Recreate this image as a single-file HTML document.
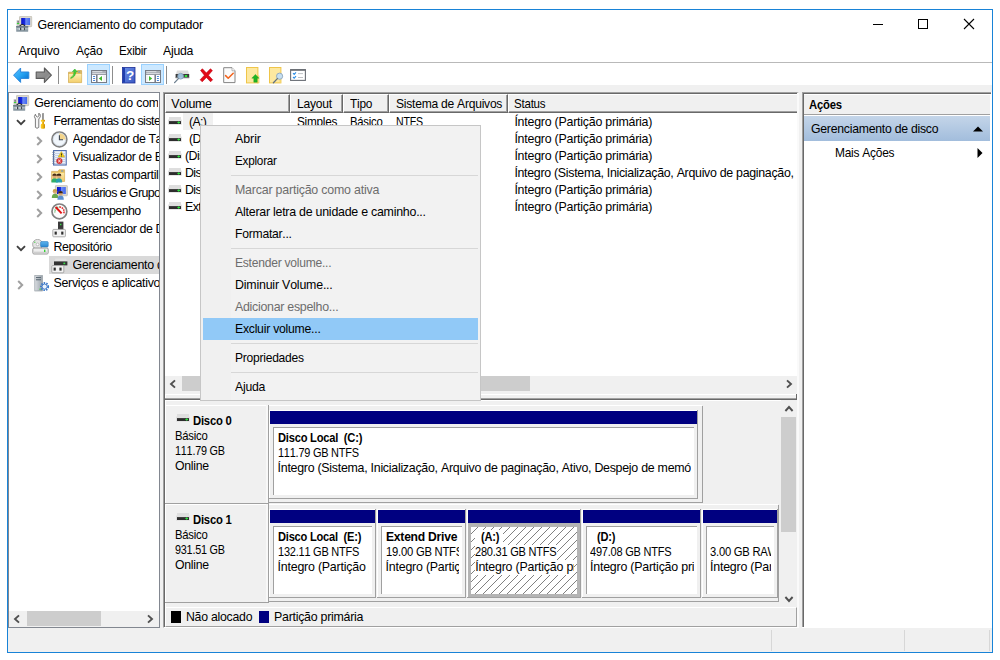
<!DOCTYPE html>
<html lang="pt-BR"><head><meta charset="utf-8"><title>Gerenciamento do computador</title>
<style>
html,body{margin:0;padding:0;}
body{width:1000px;height:660px;overflow:hidden;background:#fff;position:relative;font-family:'Liberation Sans', sans-serif;font-size:12px;color:#000;font-kerning:none;}
div,span,svg{box-sizing:border-box;}
</style></head><body>
<div style="position:absolute;left:7px;top:9px;width:986px;height:644px;border:1px solid #1883d7;background:#fff;"></div>
<svg style="position:absolute;left:16px;top:16px;" width="17" height="17" viewBox="0 0 17 17"><defs><linearGradient id="g1" x1="0" x2="1" y1="0" y2="0"><stop offset="0" stop-color="#0a12c8"/><stop offset=".45" stop-color="#1a2fe0"/><stop offset=".5" stop-color="#6f8cf5"/><stop offset="1" stop-color="#3f66ee"/></linearGradient></defs>
<rect x="3.5" y="0.3" width="12.2" height="10.4" rx="0.8" fill="#dcd9cf" stroke="#b5b2a6" stroke-width=".6"/>
<rect x="5.2" y="2" width="8.9" height="7" fill="url(#g1)"/>
<rect x="0.6" y="4.2" width="2.6" height="6.2" fill="#c9c9c9"/><rect x="1.6" y="4.8" width="1" height="2" fill="#555"/><rect x="0.9" y="7" width="2.2" height="1.1" fill="#35d335"/>
<path d="M3.7 10 Q6.5 7 9 10" fill="none" stroke="#2a2a2a" stroke-width="1.2"/>
<rect x="0.2" y="10" width="12" height="5.8" rx="0.6" fill="#8a99a3"/>
<rect x="0.2" y="10" width="12" height="1.3" fill="#6e7d87"/>
<rect x="0.6" y="12.2" width="11.2" height="1.2" fill="#b8c3ca"/>
<rect x="3.8" y="11.6" width="1.3" height="2.6" fill="#3c4348"/><rect x="7.6" y="11.6" width="1.3" height="2.6" fill="#3c4348"/>
<rect x="2.8" y="11.8" width="1" height="2.2" fill="#dfe5e8"/><rect x="6.6" y="11.8" width="1" height="2.2" fill="#dfe5e8"/></svg>
<span style="position:absolute;left:37.5px;top:18px;height:14px;line-height:14px;white-space:pre;font-size:12.4px;color:#000;letter-spacing:-0.201px;">Gerenciamento do computador</span>
<svg style="position:absolute;left:868px;top:14px;" width="120" height="20" viewBox="0 0 120 20"><path d="M5 10.5H15" stroke="#000" stroke-width="1"/>
<rect x="50.5" y="5.5" width="9" height="9" fill="none" stroke="#000" stroke-width="1"/>
<path d="M96 5L106 15M106 5L96 15" stroke="#000" stroke-width="1.1"/></svg>
<span style="position:absolute;left:18.4px;top:44px;height:14px;line-height:14px;white-space:pre;font-size:12.4px;color:#000;letter-spacing:-0.136px;">Arquivo</span>
<span style="position:absolute;left:76.4px;top:44px;height:14px;line-height:14px;white-space:pre;font-size:12.4px;color:#000;letter-spacing:-0.250px;"><span style="display:inline-block;transform:scaleX(0.9673);transform-origin:0 0;">Ação</span></span>
<span style="position:absolute;left:119px;top:44px;height:14px;line-height:14px;white-space:pre;font-size:12.4px;color:#000;letter-spacing:-0.250px;"><span style="display:inline-block;transform:scaleX(0.9417);transform-origin:0 0;">Exibir</span></span>
<span style="position:absolute;left:163.4px;top:44px;height:14px;line-height:14px;white-space:pre;font-size:12.4px;color:#000;letter-spacing:-0.250px;"><span style="display:inline-block;transform:scaleX(0.9901);transform-origin:0 0;">Ajuda</span></span>
<div style="position:absolute;left:8px;top:62px;width:984px;height:1px;background:#b9b9b9;"></div>
<svg style="position:absolute;left:12.6px;top:67px;" width="18" height="16" viewBox="0 0 18 16"><defs><linearGradient id="g2" x1="0" x2="1" y1="0" y2="1"><stop offset="0" stop-color="#58c2ff"/><stop offset=".5" stop-color="#27a3f2"/><stop offset="1" stop-color="#0467c8"/></linearGradient></defs>
<path d="M0.6 8.2 L7.6 1 L7.6 5 L15.8 5 L15.8 11.4 L7.6 11.4 L7.6 15.4 Z" fill="url(#g2)" stroke="#2a86dc" stroke-width="1" stroke-linejoin="round"/></svg>
<svg style="position:absolute;left:35px;top:67px;" width="18" height="16" viewBox="0 0 18 16"><defs><linearGradient id="g3" x1="0" x2="1" y1="0" y2="1"><stop offset="0" stop-color="#9a9a9a"/><stop offset=".6" stop-color="#8a8a8a"/><stop offset="1" stop-color="#b5b5b5"/></linearGradient></defs>
<path d="M16.4 8.2 L9.4 1 L9.4 5 L1.2 5 L1.2 11.4 L9.4 11.4 L9.4 15.4 Z" fill="url(#g3)" stroke="#5a5a5a" stroke-width="1.1" stroke-linejoin="round"/></svg>
<div style="position:absolute;left:58px;top:66px;width:1px;height:18px;background:#8d8d8d;"></div>
<svg style="position:absolute;left:68px;top:69px;" width="16" height="16" viewBox="0 0 16 16"><defs><linearGradient id="g4" x1="0" x2="0" y1="0" y2="1"><stop offset="0" stop-color="#fdeeb5"/><stop offset="1" stop-color="#f3cf6c"/></linearGradient></defs>
<path d="M0.5 3.2 L8.5 3.2 L9.5 1.6 L13.6 1.6 L13.6 13.6 L0.5 13.6 Z" fill="#e9c15b" stroke="#c9a04a" stroke-width=".7"/>
<rect x="0.8" y="5" width="12.6" height="8.4" fill="url(#g4)"/>
<rect x="10" y="2.4" width="2.4" height="1.2" rx=".6" fill="#4e8fe0"/>
<path d="M2.6 8.8 Q6 7 6.2 2.4 L4.4 2.6 L6.8 0 L9.4 2.8 L7.8 2.6 Q7.6 8 2.8 9.4 Z" fill="#3fcf35" stroke="#2aa822" stroke-width=".5"/></svg>
<div style="position:absolute;left:87px;top:64px;width:23px;height:21px;background:#cce8ff;border:1px solid #99d1ff;"></div>
<svg style="position:absolute;left:91px;top:70px;" width="16" height="13" viewBox="0 0 16 13"><rect x=".5" y=".5" width="15" height="12" fill="#8a8f99" stroke="#777c86" stroke-width="1"/>
<rect x="1.2" y="1.2" width="13.6" height="1.2" fill="#e9ebee"/><rect x="1.2" y="3.1" width="13.6" height="1.1" fill="#dfe2e6"/>
<rect x="11.6" y="1.1" width="1" height="1.2" fill="#8a8f99"/><rect x="13.4" y="1.1" width="1" height="1.2" fill="#8a8f99"/><rect x="1" y="5" width="4.2" height="7" fill="#fff"/><rect x="6.4" y="5" width="8.6" height="7" fill="#fff"/>
<rect x="2" y="6.1" width="2.2" height="1" rx=".5" fill="#3f7fd6"/><rect x="2" y="8" width="2.2" height="1" rx=".5" fill="#3f7fd6"/><rect x="2" y="9.9" width="2.2" height="1" rx=".5" fill="#3f7fd6"/>
<rect x="5.2" y="4.6" width="1.1" height="7.8" fill="#717784"/>
<path d="M11 6 L11 11 L7.8 8.5 Z" fill="#41b82c"/><rect x="12.4" y="5.4" width="2.2" height="6.4" fill="#f1f1f1"/></svg>
<div style="position:absolute;left:112px;top:66px;width:1px;height:18px;background:#8d8d8d;"></div>
<svg style="position:absolute;left:122px;top:67px;" width="14" height="17" viewBox="0 0 14 17"><defs><linearGradient id="g5" x1="0" x2="1" y1="0" y2="1"><stop offset="0" stop-color="#6d92ea"/><stop offset="1" stop-color="#3a58c2"/></linearGradient></defs>
<rect x=".4" y=".4" width="12.6" height="15.6" fill="url(#g5)" stroke="#1d2f96" stroke-width=".8"/>
<rect x=".8" y=".8" width="2.2" height="14.8" fill="#1f3fae"/>
<text x="8" y="13" font-family="Liberation Sans, sans-serif" font-weight="bold" font-size="13.5" text-anchor="middle" fill="#fff">?</text></svg>
<div style="position:absolute;left:141px;top:64px;width:23px;height:21px;background:#cce8ff;border:1px solid #99d1ff;"></div>
<svg style="position:absolute;left:145px;top:70px;" width="16" height="13" viewBox="0 0 16 13"><rect x=".5" y=".5" width="15" height="12" fill="#8a8f99" stroke="#777c86" stroke-width="1"/>
<rect x="1.2" y="1.2" width="13.6" height="1.2" fill="#e9ebee"/><rect x="1.2" y="3.1" width="13.6" height="1.1" fill="#dfe2e6"/>
<rect x="11.6" y="1.1" width="1" height="1.2" fill="#8a8f99"/><rect x="13.4" y="1.1" width="1" height="1.2" fill="#8a8f99"/><rect x="1" y="5" width="8.6" height="7" fill="#fff"/><rect x="10.8" y="5" width="4.2" height="7" fill="#fff"/>
<rect x="11.8" y="6.1" width="2.2" height="1" rx=".5" fill="#3f7fd6"/><rect x="11.8" y="8" width="2.2" height="1" rx=".5" fill="#3f7fd6"/><rect x="11.8" y="9.9" width="2.2" height="1" rx=".5" fill="#3f7fd6"/>
<rect x="9.7" y="4.6" width="1.1" height="7.8" fill="#717784"/>
<path d="M4 6 L4 11 L7.2 8.5 Z" fill="#41b82c"/><rect x="1.2" y="5.4" width="1.6" height="6.4" fill="#f1f1f1"/></svg>
<div style="position:absolute;left:166px;top:66px;width:1px;height:18px;background:#8d8d8d;"></div>
<svg style="position:absolute;left:174px;top:70px;" width="17" height="14" viewBox="0 0 17 14"><path d="M3 0.6 L14 0.6 L15 4 L2 4 Z" fill="#dcdcdc"/>
<rect x="1.6" y="4" width="13.6" height="4" fill="#3a3a3a"/><rect x="1.6" y="7.4" width="13.6" height=".9" fill="#9a9a9a"/>
<rect x="10.8" y="5" width="2.4" height="2" fill="#2fe53a"/>
<circle cx="6.6" cy="6.2" r="2.9" fill="#a9cdea" fill-opacity=".9" stroke="#7d99b2" stroke-width=".8"/>
<path d="M4.4 8.6 L0.6 12.6" stroke="#6d7f8f" stroke-width="1.3" stroke-linecap="round"/></svg>
<svg style="position:absolute;left:198.6px;top:68px;" width="15" height="15" viewBox="0 0 15 15"><path d="M1.6 2.4 L3.4 0.8 L7.4 5 L11.4 0.8 L13.4 2.6 L9.4 7.2 L13.6 11.8 L11.6 13.8 L7.4 9.4 L3.2 13.8 L1.2 11.8 L5.4 7.2 Z" fill="#e20a17" stroke="#c00010" stroke-width=".6" stroke-linejoin="round"/></svg>
<svg style="position:absolute;left:223px;top:67px;" width="13" height="17" viewBox="0 0 13 17"><path d="M0.7 0.7 L9 0.7 L12 3.8 L12 15.6 L0.7 15.6 Z" fill="#fbfbfb" stroke="#858585" stroke-width="1"/>
<path d="M9 0.7 L9 3.8 L12 3.8" fill="#fff" stroke="#9a9a9a" stroke-width=".7"/>
<path d="M2.6 8.6 L5.2 11.2 L10.2 6.2" fill="none" stroke="#f2631c" stroke-width="1.5" stroke-linecap="round" stroke-linejoin="round"/></svg>
<svg style="position:absolute;left:246px;top:67px;" width="14" height="17" viewBox="0 0 14 17"><rect x=".5" y=".5" width="11.4" height="15.4" fill="#fde8a0" stroke="#efc549" stroke-width="1"/>
<rect x="11.4" y="9" width="1.6" height="6.9" fill="#fde8a0" stroke="#efc549" stroke-width=".6"/>
<path d="M9.4 7.4 L13 11.2 L11.2 11.2 L11.2 15.2 L7.8 15.2 L7.8 11.2 L5.8 11.2 Z" fill="#1fb424" stroke="#17a01c" stroke-width=".4"/></svg>
<svg style="position:absolute;left:269px;top:67px;" width="15" height="17" viewBox="0 0 15 17"><rect x=".5" y=".5" width="11.4" height="15.4" fill="#fde8a0" stroke="#efc549" stroke-width="1"/>
<rect x="10.6" y="10" width="1.3" height="5.9" fill="#f5d670"/>
<circle cx="10.6" cy="9.2" r="3.1" fill="#c5def0" stroke="#8fa6bb" stroke-width=".9"/>
<path d="M8.4 11.6 L4.4 15.8" stroke="#5f7080" stroke-width="1.3" stroke-linecap="round"/></svg>
<svg style="position:absolute;left:290px;top:69px;" width="16" height="12" viewBox="0 0 16 12"><rect x=".6" y=".6" width="14.8" height="10.8" fill="#fff" stroke="#6b6f76" stroke-width="1.1"/>
<rect x=".6" y=".2" width="14.8" height="1.6" fill="#6b6f76"/>
<path d="M3 4.2 L4.2 5.4 L6 3.4" fill="none" stroke="#2f8fe6" stroke-width="1.1"/><path d="M3 8 L4.2 9.2 L6 7.2" fill="none" stroke="#2f8fe6" stroke-width="1.1"/>
<rect x="8" y="4.2" width="5" height=".9" fill="#b9bcc0"/><rect x="8" y="8" width="5" height=".9" fill="#b9bcc0"/></svg>
<div style="position:absolute;left:8px;top:85px;width:984px;height:567px;background:#f0f0f0;"></div>
<div style="position:absolute;left:8px;top:92px;width:152px;height:536px;background:#fff;border:1px solid #828790;"></div>
<svg style="position:absolute;left:13px;top:95px;" width="17" height="17" viewBox="0 0 17 17"><defs><linearGradient id="g6" x1="0" x2="1" y1="0" y2="0"><stop offset="0" stop-color="#0a12c8"/><stop offset=".45" stop-color="#1a2fe0"/><stop offset=".5" stop-color="#6f8cf5"/><stop offset="1" stop-color="#3f66ee"/></linearGradient></defs>
<rect x="3.5" y="0.3" width="12.2" height="10.4" rx="0.8" fill="#dcd9cf" stroke="#b5b2a6" stroke-width=".6"/>
<rect x="5.2" y="2" width="8.9" height="7" fill="url(#g6)"/>
<rect x="0.6" y="4.2" width="2.6" height="6.2" fill="#c9c9c9"/><rect x="1.6" y="4.8" width="1" height="2" fill="#555"/><rect x="0.9" y="7" width="2.2" height="1.1" fill="#35d335"/>
<path d="M3.7 10 Q6.5 7 9 10" fill="none" stroke="#2a2a2a" stroke-width="1.2"/>
<rect x="0.2" y="10" width="12" height="5.8" rx="0.6" fill="#8a99a3"/>
<rect x="0.2" y="10" width="12" height="1.3" fill="#6e7d87"/>
<rect x="0.6" y="12.2" width="11.2" height="1.2" fill="#b8c3ca"/>
<rect x="3.8" y="11.6" width="1.3" height="2.6" fill="#3c4348"/><rect x="7.6" y="11.6" width="1.3" height="2.6" fill="#3c4348"/>
<rect x="2.8" y="11.8" width="1" height="2.2" fill="#dfe5e8"/><rect x="6.6" y="11.8" width="1" height="2.2" fill="#dfe5e8"/></svg>
<span style="position:absolute;left:34.2px;top:96px;height:14px;line-height:14px;white-space:pre;font-size:12.4px;color:#000;letter-spacing:-0.201px;width:124.3px;overflow:hidden;">Gerenciamento do computador (local)</span>
<svg style="position:absolute;left:15.5px;top:119px;" width="10" height="7" viewBox="0 0 10 7"><path d="M1 1.2 L5 5.2 L9 1.2" fill="none" stroke="#404040" stroke-width="1.9"/></svg>
<svg style="position:absolute;left:33px;top:113px;" width="14" height="17" viewBox="0 0 14 17"><defs><linearGradient id="g7" x1="0" x2="1" y1="0" y2="0"><stop offset="0" stop-color="#f7cf2a"/><stop offset=".45" stop-color="#f5bd12"/><stop offset="1" stop-color="#c98a04"/></linearGradient></defs>
<path d="M2.4 1.2 Q0.4 3.6 2.4 6 L2.4 14.4 Q4 16.2 5.8 14.4 L5.8 6 Q8.4 4 7 1 L5.6 .4 L6 2.8 L4.4 4 L3 3 Z" fill="#f6f6f6" stroke="#7c7c7c" stroke-width="1" stroke-linejoin="round"/>
<rect x="9.3" y=".2" width="1.5" height="6.8" fill="#6a6a6a"/><rect x="10.1" y=".2" width=".7" height="6.8" fill="#a8a8a8"/>
<rect x="7.8" y="6.8" width="4.2" height="2" rx=".7" fill="url(#g7)"/><rect x="9" y="8.6" width="2" height="2.6" fill="url(#g7)"/><rect x="7.8" y="10.8" width="4.2" height="5" rx="1.3" fill="url(#g7)"/></svg>
<span style="position:absolute;left:53.5px;top:114px;height:14px;line-height:14px;white-space:pre;font-size:12.4px;color:#000;letter-spacing:-0.468px;width:105.0px;overflow:hidden;">Ferramentas do sistema</span>
<svg style="position:absolute;left:36.4px;top:136px;" width="7" height="10" viewBox="0 0 7 10"><path d="M1.2 1 L5.2 5 L1.2 9" fill="none" stroke="#a0a0a0" stroke-width="2"/></svg>
<svg style="position:absolute;left:50.6px;top:131px;" width="17" height="17" viewBox="0 0 17 17"><circle cx="8.4" cy="8.4" r="7.4" fill="#f1f6fb" stroke="#808080" stroke-width="1.7"/>
<circle cx="8.4" cy="8.4" r="6.3" fill="none" stroke="#cfd8e2" stroke-width=".8"/>
<path d="M8.4 8.4 L8.4 2.2 A6.2 6.2 0 0 1 14.6 8.4 Z" fill="#f3d48a"/>
<path d="M8.4 4.2 L8.4 8.8 L12 8.8" fill="none" stroke="#3c4652" stroke-width="1.1"/></svg>
<span style="position:absolute;left:72.5px;top:132px;height:14px;line-height:14px;white-space:pre;font-size:12.4px;color:#000;letter-spacing:-0.412px;width:86.0px;overflow:hidden;">Agendador de Tarefas</span>
<svg style="position:absolute;left:36.4px;top:154px;" width="7" height="10" viewBox="0 0 7 10"><path d="M1.2 1 L5.2 5 L1.2 9" fill="none" stroke="#a0a0a0" stroke-width="2"/></svg>
<svg style="position:absolute;left:52px;top:150px;" width="15" height="16" viewBox="0 0 15 16"><rect x="1.6" y=".6" width="12.6" height="14.4" fill="#f4f7fc" stroke="#4a69ad" stroke-width="1.1"/>
<g stroke="#a9bbdd" stroke-width=".7"><path d="M3 3.4H13M3 5.4H13M3 7.4H13M3 9.4H13M3 11.4H13M3 13.4H13"/></g>
<g stroke="#6b7a94" stroke-width=".9"><path d="M.4 2.4H2.6M.4 4.6H2.6M.4 6.8H2.6M.4 9H2.6M.4 11.2H2.6M.4 13.4H2.6"/></g>
<path d="M9.4 1.6 L12.6 7 L6.2 7 Z" fill="#f5d21f" stroke="#c9a40e" stroke-width=".5"/><rect x="9" y="3.4" width=".9" height="2" fill="#222"/><rect x="9" y="5.8" width=".9" height=".7" fill="#222"/>
<circle cx="7.4" cy="11" r="2.8" fill="#e03b3b" stroke="#b71f1f" stroke-width=".5"/><path d="M6.2 9.8 L8.6 12.2 M8.6 9.8 L6.2 12.2" stroke="#fff" stroke-width=".9"/></svg>
<span style="position:absolute;left:72.5px;top:150px;height:14px;line-height:14px;white-space:pre;font-size:12.4px;color:#000;letter-spacing:-0.371px;width:86.0px;overflow:hidden;">Visualizador de Eventos</span>
<svg style="position:absolute;left:36.4px;top:172px;" width="7" height="10" viewBox="0 0 7 10"><path d="M1.2 1 L5.2 5 L1.2 9" fill="none" stroke="#a0a0a0" stroke-width="2"/></svg>
<svg style="position:absolute;left:51px;top:169px;" width="16" height="15" viewBox="0 0 16 15"><defs><linearGradient id="g8" x1="0" x2="0" y1="0" y2="1"><stop offset="0" stop-color="#fbe8a8"/><stop offset="1" stop-color="#f0c965"/></linearGradient></defs>
<path d="M.6 2.4 L7 2.4 L8 .8 L13.6 .8 L13.6 12.4 L.6 12.4 Z" fill="#e8c05a" stroke="#c9a04a" stroke-width=".6"/>
<rect x=".9" y="3.8" width="12.4" height="8.4" fill="url(#g8)"/><rect x="10" y="1.4" width="2.4" height="1" rx=".5" fill="#4e8fe0"/>
<path d="M0.3999999999999999 13.4 Q0.3999999999999999 9.2 3.6 9.2 Q6.800000000000001 9.2 6.800000000000001 13.4 Z" fill="#2fae6b"/><circle cx="3.6" cy="7" r="2.2" fill="#d9a878"/><path d="M1.3000000000000003 6.8 A2.3 2.3 0 0 1 5.9 6.8 Z" fill="#4a2d15"/><path d="M4.8 13.4 Q4.8 9.2 8 9.2 Q11.2 9.2 11.2 13.4 Z" fill="#2a9fb0"/><circle cx="8" cy="7" r="2.2" fill="#d9a878"/><path d="M5.7 6.8 A2.3 2.3 0 0 1 10.3 6.8 Z" fill="#3a2410"/></svg>
<span style="position:absolute;left:72.5px;top:168px;height:14px;line-height:14px;white-space:pre;font-size:12.4px;color:#000;letter-spacing:-0.353px;width:86.0px;overflow:hidden;">Pastas compartilhadas</span>
<svg style="position:absolute;left:36.4px;top:190px;" width="7" height="10" viewBox="0 0 7 10"><path d="M1.2 1 L5.2 5 L1.2 9" fill="none" stroke="#a0a0a0" stroke-width="2"/></svg>
<svg style="position:absolute;left:51px;top:185px;" width="17" height="17" viewBox="0 0 17 17"><defs><linearGradient id="g9" x1="0" x2="1" y1="0" y2="0"><stop offset="0" stop-color="#0a12c8"/><stop offset=".45" stop-color="#1a2fe0"/><stop offset=".5" stop-color="#6f8cf5"/><stop offset="1" stop-color="#3f66ee"/></linearGradient></defs>
<rect x="4.4" y=".4" width="12" height="10.4" rx=".8" fill="#dcd9cf" stroke="#b5b2a6" stroke-width=".6"/><rect x="6" y="2" width="8.8" height="7" fill="url(#g9)"/>
<path d="M0.7999999999999998 13.0 Q0.7999999999999998 8.8 4 8.8 Q7.2 8.8 7.2 13.0 Z" fill="#6aa84f"/><circle cx="4" cy="6.6" r="2.2" fill="#d9a878"/><path d="M1.7000000000000002 6.3999999999999995 A2.3 2.3 0 0 1 6.3 6.3999999999999995 Z" fill="#c9a04a"/><path d="M6.3999999999999995 14.8 Q6.3999999999999995 10.600000000000001 9.6 10.600000000000001 Q12.8 10.600000000000001 12.8 14.8 Z" fill="#5b8fd0"/><circle cx="9.6" cy="8.4" r="2.2" fill="#d9a878"/><path d="M7.3 8.200000000000001 A2.3 2.3 0 0 1 11.899999999999999 8.200000000000001 Z" fill="#3a2410"/></svg>
<span style="position:absolute;left:72.5px;top:186px;height:14px;line-height:14px;white-space:pre;font-size:12.4px;color:#000;letter-spacing:-0.574px;width:86.0px;overflow:hidden;">Usuários e Grupos Locais</span>
<svg style="position:absolute;left:36.4px;top:208px;" width="7" height="10" viewBox="0 0 7 10"><path d="M1.2 1 L5.2 5 L1.2 9" fill="none" stroke="#a0a0a0" stroke-width="2"/></svg>
<svg style="position:absolute;left:50.6px;top:203px;" width="17" height="17" viewBox="0 0 17 17"><circle cx="8.4" cy="8.4" r="7.4" fill="#fbfbfb" stroke="#808080" stroke-width="1.7"/>
<path d="M4 9.4 A4.6 4.6 0 0 1 8.4 4" fill="none" stroke="#3fa648" stroke-width="1.3" stroke-dasharray="1 .8"/>
<path d="M8.4 4 A4.6 4.6 0 0 1 12.4 11" fill="none" stroke="#e02020" stroke-width="1.5" stroke-dasharray="1.6 .8"/>
<path d="M4.6 4 L10.6 10.4" stroke="#e01414" stroke-width="2"/></svg>
<span style="position:absolute;left:72.5px;top:204px;height:14px;line-height:14px;white-space:pre;font-size:12.4px;color:#000;letter-spacing:-0.556px;width:86.0px;overflow:hidden;">Desempenho</span>
<svg style="position:absolute;left:51.5px;top:221px;" width="15" height="17" viewBox="0 0 15 17"><rect x="6" y=".6" width="5.4" height="8" fill="#3b3b3b"/><rect x="8" y="2.8" width="1.4" height="1.4" fill="#3be04a"/>
<rect x=".8" y="8.4" width="12.6" height="7.4" rx=".8" fill="#f2f2f2" stroke="#9b9b9b" stroke-width=".8"/>
<rect x="2.6" y="10.6" width="2.2" height="3" fill="#2e2e2e"/><rect x="9.2" y="10.6" width="2.2" height="3" fill="#2e2e2e"/></svg>
<span style="position:absolute;left:72.5px;top:222px;height:14px;line-height:14px;white-space:pre;font-size:12.4px;color:#000;letter-spacing:-0.388px;width:86.0px;overflow:hidden;">Gerenciador de Dispositivos</span>
<svg style="position:absolute;left:15.5px;top:245px;" width="10" height="7" viewBox="0 0 10 7"><path d="M1 1.2 L5 5.2 L9 1.2" fill="none" stroke="#404040" stroke-width="1.9"/></svg>
<svg style="position:absolute;left:32px;top:239px;" width="17" height="16" viewBox="0 0 17 16"><defs><linearGradient id="g10" x1="0" x2="0" y1="0" y2="1"><stop offset="0" stop-color="#5db4ee"/><stop offset="1" stop-color="#2a86d0"/></linearGradient></defs>
<circle cx="5.6" cy="5.4" r="5" fill="#e4e4e4" stroke="#9c9c9c" stroke-width=".8"/><circle cx="5.6" cy="5.4" r="1.4" fill="#fff" stroke="#9c9c9c" stroke-width=".6"/><circle cx="2.8" cy="3.2" r=".8" fill="#5fd35f"/>
<rect x="8.6" y="2.6" width="7.6" height="5.4" rx="1" fill="url(#g10)" stroke="#2b78bd" stroke-width=".6"/>
<rect x=".8" y="9" width="15.4" height="6" rx="1.2" fill="#eeeeee" stroke="#8f8f8f" stroke-width=".9"/><rect x="1.4" y="12.6" width="14.2" height="1.8" fill="#cfcfcf"/>
<rect x="12" y="10.6" width="1.4" height="2.4" fill="#35d335"/></svg>
<span style="position:absolute;left:53.5px;top:240px;height:14px;line-height:14px;white-space:pre;font-size:12.4px;color:#000;letter-spacing:-0.399px;width:105.0px;overflow:hidden;">Repositório</span>
<div style="position:absolute;left:49px;top:256px;width:110px;height:18px;background:#d9d9d9;"></div>
<svg style="position:absolute;left:50.6px;top:258px;" width="17" height="16" viewBox="0 0 17 16"><path d="M4.4 .6 L15 .6 L16 3.4 L3.4 3.4 Z" fill="#e2e2e2"/>
<rect x="3" y="3.4" width="13.4" height="4" fill="#333"/><rect x="12.4" y="4.6" width="1.8" height="1.6" fill="#3be04a"/>
<rect x=".8" y="7.6" width="12" height="7.2" rx=".8" fill="#f2f2f2" stroke="#9b9b9b" stroke-width=".8"/>
<rect x="2.6" y="9.6" width="2.2" height="3" fill="#2e2e2e"/><rect x="8.4" y="9.6" width="2.2" height="3" fill="#2e2e2e"/></svg>
<span style="position:absolute;left:72.5px;top:258px;height:14px;line-height:14px;white-space:pre;font-size:12.4px;color:#000;letter-spacing:-0.254px;width:86.0px;overflow:hidden;">Gerenciamento de disco</span>
<svg style="position:absolute;left:17.4px;top:280px;" width="7" height="10" viewBox="0 0 7 10"><path d="M1.2 1 L5.2 5 L1.2 9" fill="none" stroke="#a0a0a0" stroke-width="2"/></svg>
<svg style="position:absolute;left:33.5px;top:275px;" width="16" height="17" viewBox="0 0 16 17"><defs><linearGradient id="g11" x1="0" x2="1" y1="0" y2="0"><stop offset="0" stop-color="#d9dde1"/><stop offset="1" stop-color="#9aa3ab"/></linearGradient></defs>
<rect x=".8" y=".6" width="7.6" height="15.4" fill="url(#g11)" stroke="#8a939b" stroke-width=".6"/>
<rect x="2" y="2" width="5" height="1.1" fill="#5e6b76"/><rect x="2" y="4.2" width="5" height="1.1" fill="#5e6b76"/><rect x="5.4" y="13.6" width="1.4" height="1.2" fill="#45d045"/>
<circle cx="10.6" cy="11.6" r="3.6" fill="none" stroke="#3b78c9" stroke-width="1.8" stroke-dasharray="1.5 1.1"/><circle cx="10.6" cy="11.6" r="2.6" fill="#eaf2fb" stroke="#3b78c9" stroke-width="1"/></svg>
<span style="position:absolute;left:53.5px;top:276px;height:14px;line-height:14px;white-space:pre;font-size:12.4px;color:#000;letter-spacing:-0.298px;width:105.0px;overflow:hidden;">Serviços e aplicativos</span>
<div style="position:absolute;left:9px;top:611px;width:150px;height:16px;background:#f0f0f0;"></div>
<div style="position:absolute;left:27px;top:611px;width:74px;height:15px;background:#cdcdcd;"></div>
<svg style="position:absolute;left:12px;top:613.5px;" width="10" height="10" viewBox="0 0 10 10"><path d="M7 1.4L3 5L7 8.6" fill="none" stroke="#505050" stroke-width="1.9"/></svg>
<svg style="position:absolute;left:145px;top:613.5px;" width="10" height="10" viewBox="0 0 10 10"><path d="M3 1.4L7 5L3 8.6" fill="none" stroke="#505050" stroke-width="1.9"/></svg>
<div style="position:absolute;left:163px;top:92px;width:636px;height:536px;background:#fff;border-left:1px solid #a0a0a0;border-top:1px solid #a0a0a0;border-right:2px solid #fafafa;border-bottom:1px solid #fff;"></div>
<div style="position:absolute;left:164px;top:93px;width:633px;height:534px;border-left:1px solid #696969;border-top:1px solid #696969;"></div>
<div style="position:absolute;left:165px;top:94px;width:125px;height:19px;background:#f0f0f0;border-top:1px solid #fff;border-left:1px solid #fff;border-right:1px solid #696969;border-bottom:1px solid #696969;"></div>
<div style="position:absolute;left:166px;top:95px;width:123px;height:17px;border-right:1px solid #a0a0a0;border-bottom:1px solid #a0a0a0;"></div>
<span style="position:absolute;left:171.3px;top:97px;height:14px;line-height:14px;white-space:pre;font-size:12.4px;color:#000;letter-spacing:-0.263px;">Volume</span>
<div style="position:absolute;left:290px;top:94px;width:53px;height:19px;background:#f0f0f0;border-top:1px solid #fff;border-left:1px solid #fff;border-right:1px solid #696969;border-bottom:1px solid #696969;"></div>
<div style="position:absolute;left:291px;top:95px;width:51px;height:17px;border-right:1px solid #a0a0a0;border-bottom:1px solid #a0a0a0;"></div>
<span style="position:absolute;left:296.5px;top:97px;height:14px;line-height:14px;white-space:pre;font-size:12.4px;color:#000;letter-spacing:-0.250px;"><span style="display:inline-block;transform:scaleX(0.9735);transform-origin:0 0;">Layout</span></span>
<div style="position:absolute;left:343px;top:94px;width:46px;height:19px;background:#f0f0f0;border-top:1px solid #fff;border-left:1px solid #fff;border-right:1px solid #696969;border-bottom:1px solid #696969;"></div>
<div style="position:absolute;left:344px;top:95px;width:44px;height:17px;border-right:1px solid #a0a0a0;border-bottom:1px solid #a0a0a0;"></div>
<span style="position:absolute;left:349.8px;top:97px;height:14px;line-height:14px;white-space:pre;font-size:12.4px;color:#000;letter-spacing:-0.250px;"><span style="display:inline-block;transform:scaleX(0.9589);transform-origin:0 0;">Tipo</span></span>
<div style="position:absolute;left:389px;top:94px;width:119px;height:19px;background:#f0f0f0;border-top:1px solid #fff;border-left:1px solid #fff;border-right:1px solid #696969;border-bottom:1px solid #696969;"></div>
<div style="position:absolute;left:390px;top:95px;width:117px;height:17px;border-right:1px solid #a0a0a0;border-bottom:1px solid #a0a0a0;"></div>
<span style="position:absolute;left:395.6px;top:97px;height:14px;line-height:14px;white-space:pre;font-size:12.4px;color:#000;letter-spacing:-0.250px;"><span style="display:inline-block;transform:scaleX(0.9749);transform-origin:0 0;">Sistema de Arquivos</span></span>
<div style="position:absolute;left:508px;top:94px;width:289px;height:19px;background:#f0f0f0;border-top:1px solid #fff;border-left:1px solid #fff;border-bottom:1px solid #696969;"></div>
<div style="position:absolute;left:509px;top:95px;width:288px;height:17px;border-bottom:1px solid #a0a0a0;"></div>
<span style="position:absolute;left:514.4px;top:97px;height:14px;line-height:14px;white-space:pre;font-size:12.4px;color:#000;letter-spacing:-0.250px;"><span style="display:inline-block;transform:scaleX(0.9324);transform-origin:0 0;">Status</span></span>
<div style="position:absolute;left:183px;top:113px;width:30px;height:17px;background:#f0f0f0;"></div>
<svg style="position:absolute;left:168px;top:117px;" width="14" height="8" viewBox="0 0 14 8"><rect x="1" y="0" width="12" height="4.2" fill="#dedede"/>
<rect x="0" y="2.4" width="13.8" height="5.4" rx=".6" fill="#dfdfdf"/>
<rect x="1" y="4" width="12" height="3" fill="#2d2d2d"/><rect x="1" y="4" width="12" height=".8" fill="#444"/>
<rect x="9.4" y="5" width="2.6" height="1" fill="#2fe23f"/><rect x="10.2" y="4.3" width="1" height="2.4" fill="#2fe23f"/></svg>
<span style="position:absolute;left:189px;top:115px;height:14px;line-height:14px;white-space:pre;font-size:12.4px;color:#000;letter-spacing:-0.666px;width:96px;overflow:hidden;">(A:)</span>
<span style="position:absolute;left:296.5px;top:115px;height:14px;line-height:14px;white-space:pre;font-size:12.4px;color:#000;letter-spacing:-0.250px;"><span style="display:inline-block;transform:scaleX(0.9488);transform-origin:0 0;">Simples</span></span>
<span style="position:absolute;left:349.8px;top:115px;height:14px;line-height:14px;white-space:pre;font-size:12.4px;color:#000;letter-spacing:-0.250px;"><span style="display:inline-block;transform:scaleX(0.9123);transform-origin:0 0;">Básico</span></span>
<span style="position:absolute;left:395.6px;top:115px;height:14px;line-height:14px;white-space:pre;font-size:12.4px;color:#000;letter-spacing:-0.250px;"><span style="display:inline-block;transform:scaleX(0.8542);transform-origin:0 0;">NTFS</span></span>
<span style="position:absolute;left:514.4px;top:115px;height:14px;line-height:14px;white-space:pre;font-size:12.4px;color:#000;letter-spacing:-0.228px;">Íntegro (Partição primária)</span>
<svg style="position:absolute;left:168px;top:134px;" width="14" height="8" viewBox="0 0 14 8"><rect x="1" y="0" width="12" height="4.2" fill="#dedede"/>
<rect x="0" y="2.4" width="13.8" height="5.4" rx=".6" fill="#dfdfdf"/>
<rect x="1" y="4" width="12" height="3" fill="#2d2d2d"/><rect x="1" y="4" width="12" height=".8" fill="#444"/>
<rect x="9.4" y="5" width="2.6" height="1" fill="#2fe23f"/><rect x="10.2" y="4.3" width="1" height="2.4" fill="#2fe23f"/></svg>
<span style="position:absolute;left:189px;top:132px;height:14px;line-height:14px;white-space:pre;font-size:12.4px;color:#000;letter-spacing:-0.689px;width:96px;overflow:hidden;">(D:)</span>
<span style="position:absolute;left:296.5px;top:132px;height:14px;line-height:14px;white-space:pre;font-size:12.4px;color:#000;letter-spacing:-0.250px;"><span style="display:inline-block;transform:scaleX(0.9488);transform-origin:0 0;">Simples</span></span>
<span style="position:absolute;left:349.8px;top:132px;height:14px;line-height:14px;white-space:pre;font-size:12.4px;color:#000;letter-spacing:-0.250px;"><span style="display:inline-block;transform:scaleX(0.9123);transform-origin:0 0;">Básico</span></span>
<span style="position:absolute;left:395.6px;top:132px;height:14px;line-height:14px;white-space:pre;font-size:12.4px;color:#000;letter-spacing:-0.250px;"><span style="display:inline-block;transform:scaleX(0.8542);transform-origin:0 0;">NTFS</span></span>
<span style="position:absolute;left:514.4px;top:132px;height:14px;line-height:14px;white-space:pre;font-size:12.4px;color:#000;letter-spacing:-0.228px;">Íntegro (Partição primária)</span>
<svg style="position:absolute;left:168px;top:151px;" width="14" height="8" viewBox="0 0 14 8"><rect x="1" y="0" width="12" height="4.2" fill="#dedede"/>
<rect x="0" y="2.4" width="13.8" height="5.4" rx=".6" fill="#dfdfdf"/>
<rect x="1" y="4" width="12" height="3" fill="#2d2d2d"/><rect x="1" y="4" width="12" height=".8" fill="#444"/>
<rect x="9.4" y="5" width="2.6" height="1" fill="#2fe23f"/><rect x="10.2" y="4.3" width="1" height="2.4" fill="#2fe23f"/></svg>
<span style="position:absolute;left:185px;top:149px;height:14px;line-height:14px;white-space:pre;font-size:12.4px;color:#000;letter-spacing:-0.565px;width:100px;overflow:hidden;">(Disco 1 partição 5)</span>
<span style="position:absolute;left:296.5px;top:149px;height:14px;line-height:14px;white-space:pre;font-size:12.4px;color:#000;letter-spacing:-0.250px;"><span style="display:inline-block;transform:scaleX(0.9488);transform-origin:0 0;">Simples</span></span>
<span style="position:absolute;left:349.8px;top:149px;height:14px;line-height:14px;white-space:pre;font-size:12.4px;color:#000;letter-spacing:-0.250px;"><span style="display:inline-block;transform:scaleX(0.9123);transform-origin:0 0;">Básico</span></span>
<span style="position:absolute;left:395.6px;top:149px;height:14px;line-height:14px;white-space:pre;font-size:12.4px;color:#000;letter-spacing:-0.250px;"><span style="display:inline-block;transform:scaleX(0.8542);transform-origin:0 0;">NTFS</span></span>
<span style="position:absolute;left:514.4px;top:149px;height:14px;line-height:14px;white-space:pre;font-size:12.4px;color:#000;letter-spacing:-0.228px;">Íntegro (Partição primária)</span>
<svg style="position:absolute;left:168px;top:168px;" width="14" height="8" viewBox="0 0 14 8"><rect x="1" y="0" width="12" height="4.2" fill="#dedede"/>
<rect x="0" y="2.4" width="13.8" height="5.4" rx=".6" fill="#dfdfdf"/>
<rect x="1" y="4" width="12" height="3" fill="#2d2d2d"/><rect x="1" y="4" width="12" height=".8" fill="#444"/>
<rect x="9.4" y="5" width="2.6" height="1" fill="#2fe23f"/><rect x="10.2" y="4.3" width="1" height="2.4" fill="#2fe23f"/></svg>
<span style="position:absolute;left:185px;top:166px;height:14px;line-height:14px;white-space:pre;font-size:12.4px;color:#000;letter-spacing:-0.588px;width:100px;overflow:hidden;">Disco Local (C:)</span>
<span style="position:absolute;left:296.5px;top:166px;height:14px;line-height:14px;white-space:pre;font-size:12.4px;color:#000;letter-spacing:-0.250px;"><span style="display:inline-block;transform:scaleX(0.9488);transform-origin:0 0;">Simples</span></span>
<span style="position:absolute;left:349.8px;top:166px;height:14px;line-height:14px;white-space:pre;font-size:12.4px;color:#000;letter-spacing:-0.250px;"><span style="display:inline-block;transform:scaleX(0.9123);transform-origin:0 0;">Básico</span></span>
<span style="position:absolute;left:395.6px;top:166px;height:14px;line-height:14px;white-space:pre;font-size:12.4px;color:#000;letter-spacing:-0.250px;"><span style="display:inline-block;transform:scaleX(0.8542);transform-origin:0 0;">NTFS</span></span>
<span style="position:absolute;left:514.4px;top:166px;height:14px;line-height:14px;white-space:pre;font-size:12.4px;color:#000;letter-spacing:-0.300px;width:281.6px;overflow:hidden;">Íntegro (Sistema, Inicialização, Arquivo de paginação, Ativo, Despejo de memória)</span>
<svg style="position:absolute;left:168px;top:185px;" width="14" height="8" viewBox="0 0 14 8"><rect x="1" y="0" width="12" height="4.2" fill="#dedede"/>
<rect x="0" y="2.4" width="13.8" height="5.4" rx=".6" fill="#dfdfdf"/>
<rect x="1" y="4" width="12" height="3" fill="#2d2d2d"/><rect x="1" y="4" width="12" height=".8" fill="#444"/>
<rect x="9.4" y="5" width="2.6" height="1" fill="#2fe23f"/><rect x="10.2" y="4.3" width="1" height="2.4" fill="#2fe23f"/></svg>
<span style="position:absolute;left:185px;top:183px;height:14px;line-height:14px;white-space:pre;font-size:12.4px;color:#000;letter-spacing:-0.583px;width:100px;overflow:hidden;">Disco Local (E:)</span>
<span style="position:absolute;left:296.5px;top:183px;height:14px;line-height:14px;white-space:pre;font-size:12.4px;color:#000;letter-spacing:-0.250px;"><span style="display:inline-block;transform:scaleX(0.9488);transform-origin:0 0;">Simples</span></span>
<span style="position:absolute;left:349.8px;top:183px;height:14px;line-height:14px;white-space:pre;font-size:12.4px;color:#000;letter-spacing:-0.250px;"><span style="display:inline-block;transform:scaleX(0.9123);transform-origin:0 0;">Básico</span></span>
<span style="position:absolute;left:395.6px;top:183px;height:14px;line-height:14px;white-space:pre;font-size:12.4px;color:#000;letter-spacing:-0.250px;"><span style="display:inline-block;transform:scaleX(0.8542);transform-origin:0 0;">NTFS</span></span>
<span style="position:absolute;left:514.4px;top:183px;height:14px;line-height:14px;white-space:pre;font-size:12.4px;color:#000;letter-spacing:-0.228px;">Íntegro (Partição primária)</span>
<svg style="position:absolute;left:168px;top:202px;" width="14" height="8" viewBox="0 0 14 8"><rect x="1" y="0" width="12" height="4.2" fill="#dedede"/>
<rect x="0" y="2.4" width="13.8" height="5.4" rx=".6" fill="#dfdfdf"/>
<rect x="1" y="4" width="12" height="3" fill="#2d2d2d"/><rect x="1" y="4" width="12" height=".8" fill="#444"/>
<rect x="9.4" y="5" width="2.6" height="1" fill="#2fe23f"/><rect x="10.2" y="4.3" width="1" height="2.4" fill="#2fe23f"/></svg>
<span style="position:absolute;left:185px;top:200px;height:14px;line-height:14px;white-space:pre;font-size:12.4px;color:#000;letter-spacing:-0.585px;width:100px;overflow:hidden;">Extend Drive (F:)</span>
<span style="position:absolute;left:296.5px;top:200px;height:14px;line-height:14px;white-space:pre;font-size:12.4px;color:#000;letter-spacing:-0.250px;"><span style="display:inline-block;transform:scaleX(0.9488);transform-origin:0 0;">Simples</span></span>
<span style="position:absolute;left:349.8px;top:200px;height:14px;line-height:14px;white-space:pre;font-size:12.4px;color:#000;letter-spacing:-0.250px;"><span style="display:inline-block;transform:scaleX(0.9123);transform-origin:0 0;">Básico</span></span>
<span style="position:absolute;left:395.6px;top:200px;height:14px;line-height:14px;white-space:pre;font-size:12.4px;color:#000;letter-spacing:-0.250px;"><span style="display:inline-block;transform:scaleX(0.8542);transform-origin:0 0;">NTFS</span></span>
<span style="position:absolute;left:514.4px;top:200px;height:14px;line-height:14px;white-space:pre;font-size:12.4px;color:#000;letter-spacing:-0.228px;">Íntegro (Partição primária)</span>
<div style="position:absolute;left:165px;top:376px;width:632px;height:18px;background:#f0f0f0;"></div>
<div style="position:absolute;left:182px;top:376px;width:348px;height:15px;background:#cdcdcd;"></div>
<svg style="position:absolute;left:168px;top:378.5px;" width="10" height="10" viewBox="0 0 10 10"><path d="M7 1.4L3 5L7 8.6" fill="none" stroke="#505050" stroke-width="1.9"/></svg>
<svg style="position:absolute;left:784px;top:378.5px;" width="10" height="10" viewBox="0 0 10 10"><path d="M3 1.4L7 5L3 8.6" fill="none" stroke="#505050" stroke-width="1.9"/></svg>
<div style="position:absolute;left:165px;top:394px;width:632px;height:1px;background:#fff;"></div>
<div style="position:absolute;left:165px;top:395px;width:632px;height:3px;background:#f0f0f0;"></div>
<div style="position:absolute;left:165px;top:394px;width:1px;height:4px;background:#fff;"></div>
<div style="position:absolute;left:165px;top:398px;width:632px;height:1px;background:#a0a0a0;"></div>
<div style="position:absolute;left:165px;top:399px;width:632px;height:1px;background:#696969;"></div>
<div style="position:absolute;left:796px;top:394px;width:1px;height:6px;background:#696969;"></div>
<div style="position:absolute;left:165px;top:400px;width:632px;height:207px;background:#f0f0f0;border-top:1px solid #fff;border-left:1px solid #fff;"></div>
<div style="position:absolute;left:165px;top:405px;width:537px;height:1px;background:#fff;"></div>
<div style="position:absolute;left:266px;top:405px;width:2px;height:98px;background:#f8f8f8;"></div>
<div style="position:absolute;left:268px;top:405px;width:1px;height:99px;background:#a0a0a0;"></div>
<div style="position:absolute;left:165px;top:503px;width:104px;height:1px;background:#a0a0a0;"></div>
<svg style="position:absolute;left:176px;top:414px;" width="14" height="8" viewBox="0 0 14 8"><rect x="1" y="0" width="12" height="4.2" fill="#dedede"/>
<rect x="0" y="2.4" width="13.8" height="5.4" rx=".6" fill="#dfdfdf"/>
<rect x="1" y="4" width="12" height="3" fill="#2d2d2d"/><rect x="1" y="4" width="12" height=".8" fill="#444"/>
<rect x="9.4" y="5" width="2.6" height="1" fill="#2fe23f"/><rect x="10.2" y="4.3" width="1" height="2.4" fill="#2fe23f"/></svg>
<span style="position:absolute;left:192.8px;top:413.5px;height:14px;line-height:14px;white-space:pre;font-size:12.4px;color:#000;font-weight:bold;letter-spacing:-0.250px;"><span style="display:inline-block;transform:scaleX(0.9113);transform-origin:0 0;">Disco 0</span></span>
<span style="position:absolute;left:174.5px;top:428.5px;height:14px;line-height:14px;white-space:pre;font-size:12.4px;color:#000;letter-spacing:-0.250px;"><span style="display:inline-block;transform:scaleX(0.9123);transform-origin:0 0;">Básico</span></span>
<span style="position:absolute;left:174.5px;top:443.5px;height:14px;line-height:14px;white-space:pre;font-size:12.4px;color:#000;letter-spacing:-0.250px;"><span style="display:inline-block;transform:scaleX(0.8734);transform-origin:0 0;">111.79 GB</span></span>
<span style="position:absolute;left:174.5px;top:458.5px;height:14px;line-height:14px;white-space:pre;font-size:12.4px;color:#000;letter-spacing:-0.250px;"><span style="display:inline-block;transform:scaleX(0.9891);transform-origin:0 0;">Online</span></span>
<div style="position:absolute;left:702px;top:406px;width:1px;height:97px;background:#a0a0a0;"></div>
<div style="position:absolute;left:269px;top:502px;width:434px;height:1px;background:#a0a0a0;"></div>
<div style="position:absolute;left:269px;top:410px;width:428px;height:1px;background:#fff;"></div>
<div style="position:absolute;left:269px;top:410px;width:1px;height:89px;background:#fff;"></div>
<div style="position:absolute;left:697px;top:410px;width:1px;height:89px;background:#a0a0a0;"></div>
<div style="position:absolute;left:269px;top:498px;width:429px;height:1px;background:#a0a0a0;"></div>
<div style="position:absolute;left:270px;top:411px;width:427px;height:13px;background:#000080;"></div>
<div style="position:absolute;left:273px;top:427px;width:421px;height:68px;background:#fff;border-top:1px solid #a0a0a0;border-left:1px solid #a0a0a0;"></div>
<span style="position:absolute;left:277.6px;top:430.5px;height:14px;line-height:14px;white-space:pre;font-size:12.4px;color:#000;font-weight:bold;letter-spacing:-0.250px;width:413.4px;overflow:hidden;"><span style="display:inline-block;transform:scaleX(0.9001);transform-origin:0 0;">Disco Local  (C:)</span></span>
<span style="position:absolute;left:277.6px;top:445.5px;height:14px;line-height:14px;white-space:pre;font-size:12.4px;color:#000;letter-spacing:-0.250px;width:413.4px;overflow:hidden;"><span style="display:inline-block;transform:scaleX(0.8824);transform-origin:0 0;">111.79 GB NTFS</span></span>
<span style="position:absolute;left:277.6px;top:460.5px;height:14px;line-height:14px;white-space:pre;font-size:12.4px;color:#000;letter-spacing:-0.267px;width:413.4px;overflow:hidden;">Íntegro (Sistema, Inicialização, Arquivo de paginação, Ativo, Despejo de memória)</span>
<div style="position:absolute;left:165px;top:504px;width:613px;height:1px;background:#fff;"></div>
<div style="position:absolute;left:266px;top:504px;width:2px;height:98px;background:#f8f8f8;"></div>
<div style="position:absolute;left:268px;top:504px;width:1px;height:99px;background:#a0a0a0;"></div>
<div style="position:absolute;left:165px;top:602px;width:104px;height:1px;background:#a0a0a0;"></div>
<svg style="position:absolute;left:176px;top:513px;" width="14" height="8" viewBox="0 0 14 8"><rect x="1" y="0" width="12" height="4.2" fill="#dedede"/>
<rect x="0" y="2.4" width="13.8" height="5.4" rx=".6" fill="#dfdfdf"/>
<rect x="1" y="4" width="12" height="3" fill="#2d2d2d"/><rect x="1" y="4" width="12" height=".8" fill="#444"/>
<rect x="9.4" y="5" width="2.6" height="1" fill="#2fe23f"/><rect x="10.2" y="4.3" width="1" height="2.4" fill="#2fe23f"/></svg>
<span style="position:absolute;left:192.8px;top:512.5px;height:14px;line-height:14px;white-space:pre;font-size:12.4px;color:#000;font-weight:bold;letter-spacing:-0.250px;"><span style="display:inline-block;transform:scaleX(0.9113);transform-origin:0 0;">Disco 1</span></span>
<span style="position:absolute;left:174.5px;top:527.5px;height:14px;line-height:14px;white-space:pre;font-size:12.4px;color:#000;letter-spacing:-0.250px;"><span style="display:inline-block;transform:scaleX(0.9123);transform-origin:0 0;">Básico</span></span>
<span style="position:absolute;left:174.5px;top:542.5px;height:14px;line-height:14px;white-space:pre;font-size:12.4px;color:#000;letter-spacing:-0.250px;"><span style="display:inline-block;transform:scaleX(0.8734);transform-origin:0 0;">931.51 GB</span></span>
<span style="position:absolute;left:174.5px;top:557.5px;height:14px;line-height:14px;white-space:pre;font-size:12.4px;color:#000;letter-spacing:-0.250px;"><span style="display:inline-block;transform:scaleX(0.9891);transform-origin:0 0;">Online</span></span>
<div style="position:absolute;left:778px;top:505px;width:1px;height:97px;background:#a0a0a0;"></div>
<div style="position:absolute;left:269px;top:601px;width:510px;height:1px;background:#a0a0a0;"></div>
<div style="position:absolute;left:269px;top:509px;width:106px;height:1px;background:#fff;"></div>
<div style="position:absolute;left:269px;top:509px;width:1px;height:89px;background:#fff;"></div>
<div style="position:absolute;left:375px;top:509px;width:1px;height:89px;background:#a0a0a0;"></div>
<div style="position:absolute;left:269px;top:597px;width:107px;height:1px;background:#a0a0a0;"></div>
<div style="position:absolute;left:270px;top:510px;width:105px;height:13px;background:#000080;"></div>
<div style="position:absolute;left:273px;top:526px;width:99px;height:68px;background:#fff;border-top:1px solid #a0a0a0;border-left:1px solid #a0a0a0;"></div>
<span style="position:absolute;left:277.6px;top:529.5px;height:14px;line-height:14px;white-space:pre;font-size:12.4px;color:#000;font-weight:bold;letter-spacing:-0.250px;width:91.4px;overflow:hidden;"><span style="display:inline-block;transform:scaleX(0.8960);transform-origin:0 0;">Disco Local  (E:)</span></span>
<span style="position:absolute;left:277.6px;top:544.5px;height:14px;line-height:14px;white-space:pre;font-size:12.4px;color:#000;letter-spacing:-0.250px;width:91.4px;overflow:hidden;"><span style="display:inline-block;transform:scaleX(0.8867);transform-origin:0 0;">132.11 GB NTFS</span></span>
<span style="position:absolute;left:277.6px;top:559.5px;height:14px;line-height:14px;white-space:pre;font-size:12.4px;color:#000;letter-spacing:-0.213px;width:91.4px;overflow:hidden;">Íntegro (Partição primária)</span>
<div style="position:absolute;left:377px;top:509px;width:88px;height:1px;background:#fff;"></div>
<div style="position:absolute;left:377px;top:509px;width:1px;height:89px;background:#fff;"></div>
<div style="position:absolute;left:465px;top:509px;width:1px;height:89px;background:#a0a0a0;"></div>
<div style="position:absolute;left:377px;top:597px;width:89px;height:1px;background:#a0a0a0;"></div>
<div style="position:absolute;left:378px;top:510px;width:87px;height:13px;background:#000080;"></div>
<div style="position:absolute;left:381px;top:526px;width:81px;height:68px;background:#fff;border-top:1px solid #a0a0a0;border-left:1px solid #a0a0a0;"></div>
<span style="position:absolute;left:385.6px;top:529.5px;height:14px;line-height:14px;white-space:pre;font-size:12.4px;color:#000;font-weight:bold;letter-spacing:-0.250px;width:73.4px;overflow:hidden;"><span style="display:inline-block;transform:scaleX(0.9781);transform-origin:0 0;">Extend Drive  (F:)</span></span>
<span style="position:absolute;left:385.6px;top:544.5px;height:14px;line-height:14px;white-space:pre;font-size:12.4px;color:#000;letter-spacing:-0.250px;width:73.4px;overflow:hidden;"><span style="display:inline-block;transform:scaleX(0.9069);transform-origin:0 0;">19.00 GB NTFS</span></span>
<span style="position:absolute;left:385.6px;top:559.5px;height:14px;line-height:14px;white-space:pre;font-size:12.4px;color:#000;letter-spacing:-0.213px;width:73.4px;overflow:hidden;">Íntegro (Partição primária)</span>
<div style="position:absolute;left:467px;top:509px;width:113px;height:1px;background:#fff;"></div>
<div style="position:absolute;left:467px;top:509px;width:1px;height:89px;background:#fff;"></div>
<div style="position:absolute;left:580px;top:509px;width:1px;height:89px;background:#a0a0a0;"></div>
<div style="position:absolute;left:467px;top:597px;width:114px;height:1px;background:#a0a0a0;"></div>
<div style="position:absolute;left:468px;top:510px;width:112px;height:13px;background:#000080;"></div>
<div style="position:absolute;left:468px;top:523px;width:112px;height:74px;background:#fff;border:3px solid #b4b4b4;border-top-width:4px;"></div>
<svg style="position:absolute;left:471px;top:527px;" width="106" height="67" viewBox="0 0 106 67"><defs><pattern id="g12" width="8" height="8" patternUnits="userSpaceOnUse"><g fill="#808080" shape-rendering="crispEdges"><rect x="0" y="6" width="1" height="1"/><rect x="1" y="5" width="1" height="1"/><rect x="2" y="4" width="1" height="1"/><rect x="3" y="3" width="1" height="1"/><rect x="4" y="2" width="1" height="1"/><rect x="5" y="1" width="1" height="1"/><rect x="6" y="0" width="1" height="1"/><rect x="7" y="7" width="1" height="1"/></g></pattern></defs><rect width="106" height="67" fill="url(#g12)"/></svg>
<div style="position:absolute;left:475px;top:530px;width:28px;height:15px;background:#fff;"></div>
<div style="position:absolute;left:475px;top:545px;width:82px;height:15px;background:#fff;"></div>
<div style="position:absolute;left:475px;top:560px;width:99px;height:15px;background:#fff;"></div>
<span style="position:absolute;left:481.4px;top:529.5px;height:14px;line-height:14px;white-space:pre;font-size:12.4px;color:#000;font-weight:bold;letter-spacing:-0.250px;width:92.6px;overflow:hidden;"><span style="display:inline-block;transform:scaleX(0.8924);transform-origin:0 0;">(A:)</span></span>
<span style="position:absolute;left:475.2px;top:544.5px;height:14px;line-height:14px;white-space:pre;font-size:12.4px;color:#000;letter-spacing:-0.250px;width:98.8px;overflow:hidden;"><span style="display:inline-block;transform:scaleX(0.8900);transform-origin:0 0;">280.31 GB NTFS</span></span>
<span style="position:absolute;left:475.2px;top:559.5px;height:14px;line-height:14px;white-space:pre;font-size:12.4px;color:#000;letter-spacing:-0.213px;width:98.8px;overflow:hidden;">Íntegro (Partição primária)</span>
<div style="position:absolute;left:582px;top:509px;width:118px;height:1px;background:#fff;"></div>
<div style="position:absolute;left:582px;top:509px;width:1px;height:89px;background:#fff;"></div>
<div style="position:absolute;left:700px;top:509px;width:1px;height:89px;background:#a0a0a0;"></div>
<div style="position:absolute;left:582px;top:597px;width:119px;height:1px;background:#a0a0a0;"></div>
<div style="position:absolute;left:583px;top:510px;width:117px;height:13px;background:#000080;"></div>
<div style="position:absolute;left:586px;top:526px;width:111px;height:68px;background:#fff;border-top:1px solid #a0a0a0;border-left:1px solid #a0a0a0;"></div>
<span style="position:absolute;left:596.6px;top:529.5px;height:14px;line-height:14px;white-space:pre;font-size:12.4px;color:#000;font-weight:bold;letter-spacing:-0.250px;width:97.4px;overflow:hidden;"><span style="display:inline-block;transform:scaleX(0.8924);transform-origin:0 0;">(D:)</span></span>
<span style="position:absolute;left:590px;top:544.5px;height:14px;line-height:14px;white-space:pre;font-size:12.4px;color:#000;letter-spacing:-0.250px;width:104px;overflow:hidden;"><span style="display:inline-block;transform:scaleX(0.8889);transform-origin:0 0;">497.08 GB NTFS</span></span>
<span style="position:absolute;left:590px;top:559.5px;height:14px;line-height:14px;white-space:pre;font-size:12.4px;color:#000;letter-spacing:-0.213px;width:104px;overflow:hidden;">Íntegro (Partição primária)</span>
<div style="position:absolute;left:702px;top:509px;width:75px;height:1px;background:#fff;"></div>
<div style="position:absolute;left:702px;top:509px;width:1px;height:89px;background:#fff;"></div>
<div style="position:absolute;left:777px;top:509px;width:1px;height:89px;background:#a0a0a0;"></div>
<div style="position:absolute;left:702px;top:597px;width:76px;height:1px;background:#a0a0a0;"></div>
<div style="position:absolute;left:703px;top:510px;width:74px;height:13px;background:#000080;"></div>
<div style="position:absolute;left:706px;top:526px;width:68px;height:68px;background:#fff;border-top:1px solid #a0a0a0;border-left:1px solid #a0a0a0;"></div>
<span style="position:absolute;left:710px;top:544.5px;height:14px;line-height:14px;white-space:pre;font-size:12.4px;color:#000;letter-spacing:-0.250px;width:61px;overflow:hidden;"><span style="display:inline-block;transform:scaleX(0.9051);transform-origin:0 0;">3.00 GB RAW</span></span>
<span style="position:absolute;left:710px;top:559.5px;height:14px;line-height:14px;white-space:pre;font-size:12.4px;color:#000;letter-spacing:-0.213px;width:61px;overflow:hidden;">Íntegro (Partição primária)</span>
<div style="position:absolute;left:781px;top:400px;width:16px;height:207px;background:#f0f0f0;"></div>
<div style="position:absolute;left:781px;top:417px;width:15px;height:115px;background:#cdcdcd;"></div>
<svg style="position:absolute;left:783.5px;top:404px;" width="10" height="10" viewBox="0 0 10 10"><path d="M1.4 7L5 3L8.6 7" fill="none" stroke="#505050" stroke-width="1.9"/></svg>
<svg style="position:absolute;left:783.5px;top:593.5px;" width="10" height="10" viewBox="0 0 10 10"><path d="M1.4 3L5 7L8.6 3" fill="none" stroke="#505050" stroke-width="1.9"/></svg>
<div style="position:absolute;left:165px;top:607px;width:632px;height:20px;background:#f0f0f0;border-top:1px solid #fff;border-left:1px solid #fff;border-right:1px solid #a0a0a0;border-bottom:1px solid #a0a0a0;"></div>
<div style="position:absolute;left:171px;top:611px;width:10px;height:12px;background:#000;"></div>
<span style="position:absolute;left:186px;top:610px;height:14px;line-height:14px;white-space:pre;font-size:12.4px;color:#000;letter-spacing:-0.250px;"><span style="display:inline-block;transform:scaleX(0.9914);transform-origin:0 0;">Não alocado</span></span>
<div style="position:absolute;left:259px;top:611px;width:10px;height:12px;background:#000080;"></div>
<span style="position:absolute;left:274px;top:610px;height:14px;line-height:14px;white-space:pre;font-size:12.4px;color:#000;letter-spacing:-0.260px;">Partição primária</span>
<div style="position:absolute;left:802px;top:92px;width:190px;height:536px;background:#fff;"></div>
<div style="position:absolute;left:802px;top:92px;width:189px;height:1px;background:#a0a0a0;"></div>
<div style="position:absolute;left:802px;top:92px;width:1px;height:535px;background:#a0a0a0;"></div>
<div style="position:absolute;left:803px;top:93px;width:188px;height:1px;background:#696969;"></div>
<div style="position:absolute;left:803px;top:93px;width:1px;height:534px;background:#696969;"></div>
<div style="position:absolute;left:804px;top:95px;width:186px;height:19px;background:#f0f0f0;"></div>
<div style="position:absolute;left:804px;top:114px;width:186px;height:1px;background:#a0a0a0;"></div>
<span style="position:absolute;left:809.4px;top:97.7px;height:14px;line-height:14px;white-space:pre;font-size:12.4px;color:#000;font-weight:bold;letter-spacing:-0.250px;"><span style="display:inline-block;transform:scaleX(0.9115);transform-origin:0 0;">Ações</span></span>
<div style="position:absolute;left:804px;top:116px;width:186px;height:25px;background:linear-gradient(#c4d5e9,#a2bddc);"></div>
<span style="position:absolute;left:811px;top:122px;height:14px;line-height:14px;white-space:pre;font-size:12.4px;color:#000;letter-spacing:-0.250px;"><span style="display:inline-block;transform:scaleX(0.9879);transform-origin:0 0;">Gerenciamento de disco</span></span>
<svg style="position:absolute;left:972px;top:125px;" width="12" height="8" viewBox="0 0 12 8"><path d="M1 6.5L6 1.5L11 6.5Z" fill="#000"/></svg>
<span style="position:absolute;left:835px;top:146px;height:14px;line-height:14px;white-space:pre;font-size:12.4px;color:#000;letter-spacing:-0.250px;"><span style="display:inline-block;transform:scaleX(0.9628);transform-origin:0 0;">Mais Ações</span></span>
<svg style="position:absolute;left:976px;top:147px;" width="8" height="12" viewBox="0 0 8 12"><path d="M1.5 1L6.5 6L1.5 11Z" fill="#000"/></svg>
<div style="position:absolute;left:8px;top:628px;width:984px;height:24px;background:#f0f0f0;"></div>
<div style="position:absolute;left:771px;top:630px;width:1px;height:21px;background:#d7d7d7;"></div>
<div style="position:absolute;left:904px;top:630px;width:1px;height:21px;background:#d7d7d7;"></div>
<div style="position:absolute;left:989px;top:630px;width:1px;height:21px;background:#d7d7d7;"></div>
<div style="position:absolute;left:200px;top:125px;width:281px;height:276px;background:#f2f2f2;border:1px solid #c6c6c6;"></div>
<div style="position:absolute;left:201px;top:126px;width:30px;height:274px;background:#f0f0f0;"></div>
<div style="position:absolute;left:203px;top:318px;width:275px;height:22px;background:#91c9f7;"></div>
<span style="position:absolute;left:235px;top:132px;height:14px;line-height:14px;white-space:pre;font-size:12.4px;color:#000;letter-spacing:-0.043px;">Abrir</span>
<span style="position:absolute;left:235px;top:154px;height:14px;line-height:14px;white-space:pre;font-size:12.4px;color:#000;letter-spacing:-0.250px;"><span style="display:inline-block;transform:scaleX(0.9461);transform-origin:0 0;">Explorar</span></span>
<div style="position:absolute;left:231px;top:175px;width:247px;height:1px;background:#d7d7d7;"></div>
<span style="position:absolute;left:235px;top:183px;height:14px;line-height:14px;white-space:pre;font-size:12.4px;color:#6d6d6d;letter-spacing:-0.201px;">Marcar partição como ativa</span>
<span style="position:absolute;left:235px;top:205px;height:14px;line-height:14px;white-space:pre;font-size:12.4px;color:#000;letter-spacing:-0.243px;">Alterar letra de unidade e caminho...</span>
<span style="position:absolute;left:235px;top:227px;height:14px;line-height:14px;white-space:pre;font-size:12.4px;color:#000;letter-spacing:-0.250px;"><span style="display:inline-block;transform:scaleX(0.9812);transform-origin:0 0;">Formatar...</span></span>
<div style="position:absolute;left:231px;top:248px;width:247px;height:1px;background:#d7d7d7;"></div>
<span style="position:absolute;left:235px;top:256px;height:14px;line-height:14px;white-space:pre;font-size:12.4px;color:#6d6d6d;letter-spacing:-0.250px;"><span style="display:inline-block;transform:scaleX(0.9751);transform-origin:0 0;">Estender volume...</span></span>
<span style="position:absolute;left:235px;top:278px;height:14px;line-height:14px;white-space:pre;font-size:12.4px;color:#000;letter-spacing:-0.201px;">Diminuir Volume...</span>
<span style="position:absolute;left:235px;top:300px;height:14px;line-height:14px;white-space:pre;font-size:12.4px;color:#6d6d6d;letter-spacing:-0.276px;">Adicionar espelho...</span>
<span style="position:absolute;left:235px;top:322px;height:14px;line-height:14px;white-space:pre;font-size:12.4px;color:#000;letter-spacing:-0.250px;"><span style="display:inline-block;transform:scaleX(0.9873);transform-origin:0 0;">Excluir volume...</span></span>
<div style="position:absolute;left:231px;top:343px;width:247px;height:1px;background:#d7d7d7;"></div>
<span style="position:absolute;left:235px;top:351px;height:14px;line-height:14px;white-space:pre;font-size:12.4px;color:#000;letter-spacing:-0.250px;"><span style="display:inline-block;transform:scaleX(0.9725);transform-origin:0 0;">Propriedades</span></span>
<div style="position:absolute;left:231px;top:372px;width:247px;height:1px;background:#d7d7d7;"></div>
<span style="position:absolute;left:235px;top:380px;height:14px;line-height:14px;white-space:pre;font-size:12.4px;color:#000;letter-spacing:-0.250px;"><span style="display:inline-block;transform:scaleX(0.9901);transform-origin:0 0;">Ajuda</span></span>
</body></html>
